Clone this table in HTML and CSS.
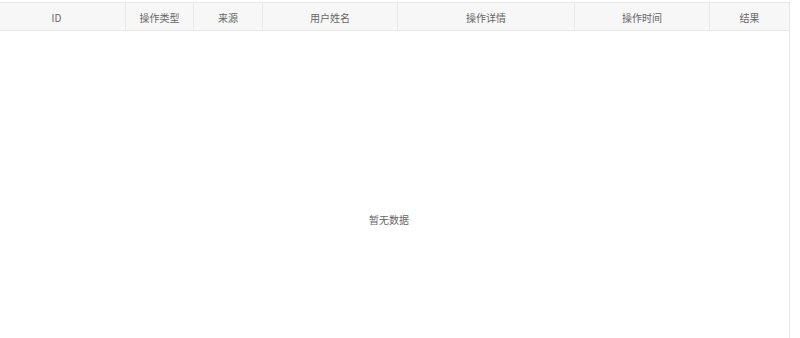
FILE: index.html
```html
<!DOCTYPE html>
<html lang="zh-CN">
<head>
<meta charset="utf-8">
<link rel="stylesheet" href="styles.css">
</head>
<body>
<div class="table">
  <div class="head">
    <div class="th th-id">ID</div>
    <div class="th">操作类型</div>
    <div class="th">来源</div>
    <div class="th">用户姓名</div>
    <div class="th">操作详情</div>
    <div class="th">操作时间</div>
    <div class="th">结果</div>
  </div>
  <div class="body">
    <span class="empty">暂无数据</span>
  </div>
</div>
</body>
</html>
```

FILE: styles.css
```css
html, body {
  margin: 0;
  padding: 0;
  background: #fff;
}
body {
  padding-top: 2px;
  font-family: "Noto Sans CJK SC", "Noto Sans", sans-serif;
  font-size: 10px;
  color: #666;
}
.table {
  width: 790px;
  box-sizing: border-box;
  border-top: 1px solid #e8e8e8;
  border-right: 1px solid #e8e8e8;
}
.head {
  display: grid;
  grid-template-columns: 126px 68px 69px 135px 177px 135px 79px;
  background: #f7f7f7;
  border-bottom: 1px solid #e8e8e8;
  height: 27px;
}
.th {
  display: flex;
  align-items: center;
  justify-content: center;
  border-right: 1px solid #e8e8e8;
  box-sizing: border-box;
  color: #666;
  padding-top: 1px;
}
.th-id {
  padding-right: 12px;
}
.th:last-child {
  border-right: none;
}
.body {
  height: 376px;
  display: flex;
  align-items: center;
  justify-content: center;
}
.empty {
  color: #666;
  margin-right: 11px;
}
```
